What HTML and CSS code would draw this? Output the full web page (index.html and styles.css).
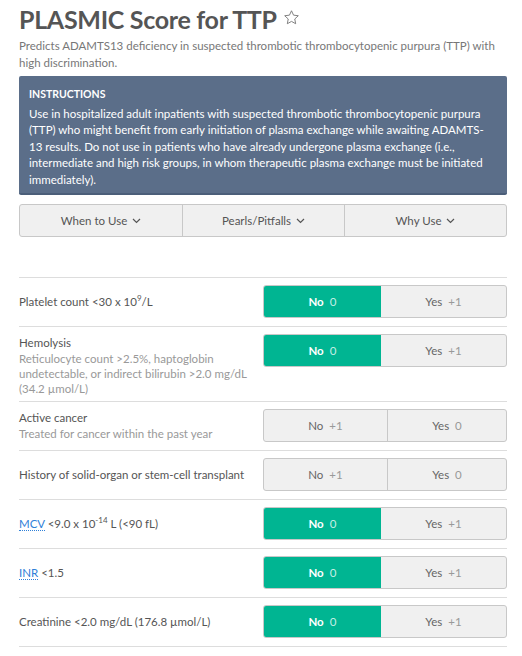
FILE: index.html
```html
<!DOCTYPE html>
<html>
<head>
<meta charset="utf-8">
<link rel="stylesheet" href="styles.css">
</head>
<body>
<div class="page">
  <h1 class="title">PLASMIC Score for TTP
    <svg class="star" width="17" height="17" viewBox="0 0 24 24"><path d="M12 2.5l2.9 6.2 6.7.8-5 4.6 1.3 6.7L12 17.5l-5.9 3.3 1.3-6.7-5-4.6 6.7-.8z" fill="none" stroke="#777" stroke-width="1.3" stroke-linejoin="round"/></svg>
  </h1>
  <p class="subtitle">Predicts ADAMTS13 deficiency in suspected thrombotic thrombocytopenic purpura (TTP) with high discrimination.</p>

  <div class="instructions">
    <div class="inst-head">INSTRUCTIONS</div>
    <div class="inst-body">Use in hospitalized adult inpatients with suspected thrombotic thrombocytopenic purpura (TTP) who might benefit from early initiation of plasma exchange while awaiting ADAMTS-13 results. Do not use in patients who have already undergone plasma exchange (i.e., intermediate and high risk groups, in whom therapeutic plasma exchange must be initiated immediately).</div>
  </div>

  <div class="tabs">
    <div class="tab">When to Use <svg class="chev" width="9" height="6" viewBox="0 0 9 6"><path d="M1 1l3.5 3.5L8 1" fill="none" stroke="#555" stroke-width="1.2"/></svg></div>
    <div class="tab">Pearls/Pitfalls <svg class="chev" width="9" height="6" viewBox="0 0 9 6"><path d="M1 1l3.5 3.5L8 1" fill="none" stroke="#555" stroke-width="1.2"/></svg></div>
    <div class="tab">Why Use <svg class="chev" width="9" height="6" viewBox="0 0 9 6"><path d="M1 1l3.5 3.5L8 1" fill="none" stroke="#555" stroke-width="1.2"/></svg></div>
  </div>

  <div class="rows">
    <div class="row">
      <div class="label"><div class="main">Platelet count &lt;30 x 10<sup>9</sup>/L</div></div>
      <div class="toggle"><div class="opt on">No <span class="pts">0</span></div><div class="opt">Yes <span class="pts">+1</span></div></div>
    </div>
    <div class="row">
      <div class="label"><div class="main">Hemolysis</div><div class="sub">Reticulocyte count &gt;2.5%, haptoglobin undetectable, or indirect bilirubin &gt;2.0&nbsp;mg/dL (34.2 µmol/L)</div></div>
      <div class="toggle"><div class="opt on">No <span class="pts">0</span></div><div class="opt">Yes <span class="pts">+1</span></div></div>
    </div>
    <div class="row">
      <div class="label"><div class="main">Active cancer</div><div class="sub">Treated for cancer within the past year</div></div>
      <div class="toggle"><div class="opt">No <span class="pts">+1</span></div><div class="opt">Yes <span class="pts">0</span></div></div>
    </div>
    <div class="row">
      <div class="label"><div class="main">History of solid-organ or stem-cell transplant</div></div>
      <div class="toggle"><div class="opt">No <span class="pts">+1</span></div><div class="opt">Yes <span class="pts">0</span></div></div>
    </div>
    <div class="row">
      <div class="label"><div class="main"><span class="abbr">MCV</span> &lt;9.0 x 10<sup>-14</sup> L (&lt;90 fL)</div></div>
      <div class="toggle"><div class="opt on">No <span class="pts">0</span></div><div class="opt">Yes <span class="pts">+1</span></div></div>
    </div>
    <div class="row">
      <div class="label"><div class="main"><span class="abbr">INR</span> &lt;1.5</div></div>
      <div class="toggle"><div class="opt on">No <span class="pts">0</span></div><div class="opt">Yes <span class="pts">+1</span></div></div>
    </div>
    <div class="row">
      <div class="label"><div class="main">Creatinine &lt;2.0 mg/dL (176.8 µmol/L)</div></div>
      <div class="toggle"><div class="opt on">No <span class="pts">0</span></div><div class="opt">Yes <span class="pts">+1</span></div></div>
    </div>
  </div>
</div>
</body>
</html>
```

FILE: styles.css
```css
* { box-sizing: border-box; }
html, body { margin: 0; padding: 0; background: #fff; }
body {
  font-family: Lato, "Open Sans", sans-serif;
  color: #555;
  font-size: 11.5px;
}
.page {
  padding: 1px 15px 0 19px;
}
.title {
  margin: 0;
  font-size: 25px;
  font-weight: 700;
  color: #555;
  line-height: 36px;
  letter-spacing: -0.3px;
  display: flex;
  align-items: center;
  gap: 6px;
}
.star { margin-top: -3px; }
.subtitle {
  margin: 0;
  font-size: 11.5px;
  line-height: 17px;
  color: #777;
}
.instructions {
  margin-top: 5px;
  background: #5b6e89;
  border-bottom: 2px solid #4b5e79;
  border-radius: 2px;
  padding: 10px 10px 5px 10px;
  color: #fff;
}
.inst-head {
  font-weight: 700;
  font-size: 10.5px;
  line-height: 16px;
}
.inst-body {
  font-size: 11.5px;
  line-height: 16.4px;
  margin-top: 4px;
}
.tabs {
  margin-top: 9px;
  display: grid;
  grid-template-columns: 1fr 1fr 1fr;
  border: 1px solid #c8c8c8;
  border-radius: 3px;
  background: #f0f0f0;
  height: 33px;
}
.tab {
  display: flex;
  align-items: center;
  justify-content: center;
  gap: 5px;
  font-size: 11.5px;
  color: #555;
}
.tab + .tab { border-left: 1px solid #c8c8c8; }
.chev { margin-top: 1px; }
.rows {
  margin-top: 40px;
  border-bottom: 1px solid #ddd;
}
.row {
  display: flex;
  align-items: flex-start;
  border-top: 1px solid #ddd;
  padding: 7px 0 4px;
}
.label {
  width: 244px;
  padding-right: 6px;
  min-height: 33px;
  display: flex;
  flex-direction: column;
  justify-content: center;
}
.main { color: #555; font-size: 11.5px; line-height: 17px; }
.sub { color: #999; font-size: 11.5px; line-height: 15.2px; }
sup { font-size: 8px; line-height: 0; vertical-align: 5px; }
.abbr {
  color: #2f80d8;
  border-bottom: 1px dotted #2f80d8;
}
.toggle {
  width: 244px;
  height: 33px;
  margin-bottom: 4px;
  display: flex;
  border: 1px solid #c8c8c8;
  border-radius: 3px;
  background: #f0f0f0;
  overflow: hidden;
}
.opt {
  flex: 1 1 auto;
  display: flex;
  align-items: center;
  justify-content: center;
  gap: 6px;
  font-size: 11.5px;
  color: #666;
  padding: 0 12px;
}
.opt + .opt { border-left: 1px solid #c8c8c8; }
.opt .pts { color: #999; }
.opt.on {
  background: #00b592;
  color: #fff;
  font-weight: 700;
  border-color: #00b592;
}
.opt.on .pts { color: #c6eee4; font-weight: 400; }
.opt.on + .opt { border-left: none; }
```
